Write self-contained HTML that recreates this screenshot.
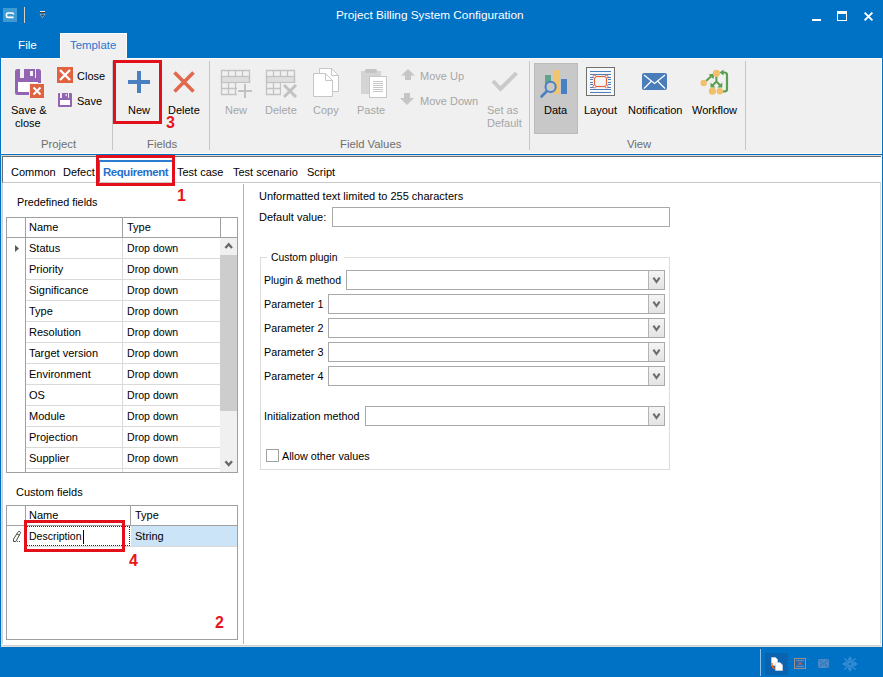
<!DOCTYPE html>
<html><head><meta charset="utf-8"><title>Project Billing System Configuration</title>
<style>
*{margin:0;padding:0;box-sizing:border-box}
html,body{width:883px;height:677px;overflow:hidden}
body{position:relative;background:#0072c6;font-family:"Liberation Sans",sans-serif;font-size:11px;color:#000}
.a{position:absolute}
.t{position:absolute;white-space:nowrap;line-height:13px;font-size:11px}
svg{position:absolute;overflow:visible}
.g{color:#a6a6a6}
.gl{color:#6e6e6e;font-size:11.3px}
.sep{position:absolute;width:1px;background:#c6c6c6;top:61px;height:89px}
.red{position:absolute;border:3px solid #e3101c}
.ann{position:absolute;color:#e8141e;font-weight:bold;font-size:16px;line-height:16px}
.row{position:absolute;height:1px;background:#dadada}
.cb{position:absolute;height:20px;border:1px solid #a9a9a9;background:#fff}
.cb i{position:absolute;right:0;top:0;width:16px;height:18px;border-left:1px solid #b4b4b4;background:linear-gradient(#f4f4f4,#e4e4e4)}
</style></head><body>

<!-- ===== Title bar ===== -->
<div class="a" style="left:3px;top:8px;width:14px;height:14px;background:#3d9ad3"></div>
<svg style="left:3px;top:8px" width="14" height="14"><path d="M10.6 6.6 Q10.6 5 9 5 H5 Q3.4 5 3.4 7.2 Q3.4 9.4 5 9.4 H10.6" fill="none" stroke="#fff" stroke-width="1.6"/></svg>
<div class="a" style="left:24px;top:7px;width:1px;height:16px;background:#d9cfc0"></div>
<svg style="left:40px;top:11px" width="6" height="8"><rect x="0" y="0" width="5" height="1" fill="#e8eef4"/><rect x="0" y="1" width="5" height="1" fill="#3a3a3a"/><path d="M0 3.2 H5 L2.5 6.6 Z" fill="#3a3a3a" stroke="#f0f0f0" stroke-width="0.5"/></svg>
<div class="t" style="left:336px;top:8px;font-size:11.8px;line-height:14px;color:#fff">Project Billing System Configuration</div>
<div class="a" style="left:812px;top:19px;width:9px;height:2px;background:#fff"></div>
<div class="a" style="left:837px;top:11px;width:10px;height:10px;border:1px solid #fff;border-top-width:3px"></div>
<svg style="left:864px;top:12px" width="9" height="9"><path d="M0.6 0.6 L8.4 8.4 M8.4 0.6 L0.6 8.4" stroke="#fff" stroke-width="1.9"/></svg>

<!-- ===== Ribbon tabs ===== -->
<div class="t" style="left:18px;top:38px;color:#fff;font-size:11.7px">File</div>
<div class="a" style="left:60px;top:33px;width:67px;height:26px;background:#f0f0f0;border-top:1px solid #fdfbf8;border-left:1px solid #fdfbf8;border-right:1px solid #fdfbf8"></div>
<div class="t" style="left:70px;top:39px;color:#1f76cf;font-size:11.4px">Template</div>

<!-- ===== Ribbon body ===== -->
<div class="a" style="left:1px;top:58px;width:881px;height:96px;background:#f0f0f0;border:1px solid #fdfbf8;border-bottom-color:#fcf8f2"></div>
<div class="a" style="left:61px;top:58px;width:65px;height:1px;background:#f0f0f0"></div>

<!-- Project group -->
<svg style="left:15px;top:69px" width="30" height="30">
 <rect x="0" y="0" width="26" height="26" rx="2.5" fill="#9363b4"/>
 <rect x="5" y="0" width="4" height="9" fill="#f0f0f0"/>
 <rect x="20" y="0" width="1" height="9" fill="#f0f0f0"/>
 <rect x="15" y="2" width="3" height="5" fill="#f4f0f8"/>
 <rect x="3" y="13" width="20" height="10" fill="#fff"/>
 <rect x="14" y="14" width="16" height="16" fill="#f0f0f0"/>
 <rect x="15" y="15" width="14" height="14" fill="#e0623f"/>
 <path d="M18.5 18.5 L25.5 25.5 M25.5 18.5 L18.5 25.5" stroke="#fff" stroke-width="2"/>
</svg>
<div class="t" style="left:11px;top:104px">Save &amp;</div>
<div class="t" style="left:15px;top:117px">close</div>
<svg style="left:57px;top:67px" width="16" height="16"><rect width="16" height="16" fill="#e0623f"/><path d="M3 3 L13 13 M13 3 L3 13" stroke="#fff" stroke-width="2.4"/></svg>
<div class="t" style="left:77px;top:70px">Close</div>
<svg style="left:58px;top:93px" width="14" height="14">
 <rect width="14" height="14" rx="1" fill="#9363b4"/>
 <rect x="2" y="0" width="2" height="5" fill="#f0f0f0"/>
 <rect x="10" y="0" width="1" height="5" fill="#f0f0f0"/>
 <rect x="7.6" y="1" width="1.2" height="2.2" fill="#eee"/>
 <rect x="2" y="7" width="10" height="5" fill="#fff"/>
</svg>
<div class="t" style="left:77px;top:95px">Save</div>
<div class="t gl" style="left:41px;top:138px">Project</div>
<div class="sep" style="left:112px"></div>

<!-- Fields group -->
<svg style="left:128px;top:71px" width="22" height="22"><path d="M11 0 V22 M0 11 H22" stroke="#4a7fc0" stroke-width="4"/></svg>
<div class="t" style="left:128px;top:104px">New</div>
<svg style="left:173px;top:71px" width="22" height="22"><path d="M1.5 1.5 L20.5 20.5 M20.5 1.5 L1.5 20.5" stroke="#e0694d" stroke-width="3.6"/></svg>
<div class="t" style="left:168px;top:104px">Delete</div>
<div class="t gl" style="left:147px;top:138px">Fields</div>
<div class="sep" style="left:209px"></div>

<!-- Field values group -->
<svg style="left:221px;top:70px" width="32" height="28">
 <g stroke="#c2c2c2" stroke-width="1.3" fill="none">
 <rect x="0.5" y="6.5" width="28" height="6" fill="#dedede"/>
 <path d="M0.5 0.5 H28.5 V24.5 H0.5 Z M0.5 18.5 H28.5 M7.5 0.5 V6.5 M14.5 0.5 V6.5 M21.5 0.5 V6.5 M7.5 12.5 V24.5 M14.5 12.5 V24.5 M21.5 12.5 V24.5"/>
 </g>
 <rect x="16" y="13" width="16" height="15" fill="#f0f0f0"/>
 <path d="M24 14 V28 M17 21 H31" stroke="#c2c2c2" stroke-width="2"/>
</svg>
<div class="t g" style="left:225px;top:104px">New</div>
<svg style="left:266px;top:70px" width="32" height="28">
 <g stroke="#c2c2c2" stroke-width="1.3" fill="none">
 <rect x="0.5" y="6.5" width="28" height="6" fill="#dedede"/>
 <path d="M0.5 0.5 H28.5 V24.5 H0.5 Z M0.5 18.5 H28.5 M7.5 0.5 V6.5 M14.5 0.5 V6.5 M21.5 0.5 V6.5 M7.5 12.5 V24.5 M14.5 12.5 V24.5 M21.5 12.5 V24.5"/>
 </g>
 <rect x="15" y="13" width="17" height="15" fill="#f0f0f0"/>
 <path d="M18 15 L30 27 M30 15 L18 27" stroke="#c2c2c2" stroke-width="3"/>
</svg>
<div class="t g" style="left:265px;top:104px">Delete</div>
<svg style="left:313px;top:68px" width="28" height="30">
 <path d="M6.5 0.5 H18.5 L25.5 7.5 V23.5 H6.5 Z" fill="#fff" stroke="#c6c6c6"/>
 <path d="M18.5 0.5 V7.5 H25.5" fill="none" stroke="#c6c6c6"/>
 <path d="M0.5 5.5 H12.5 L19.5 12.5 V28.5 H0.5 Z" fill="#fff" stroke="#c6c6c6"/>
 <path d="M12.5 5.5 V12.5 H19.5" fill="none" stroke="#c6c6c6"/>
</svg>
<div class="t g" style="left:313px;top:104px">Copy</div>
<svg style="left:361px;top:68px" width="28" height="31">
 <rect x="0" y="3" width="20" height="23" fill="#d4d4d4"/>
 <rect x="4" y="1" width="12" height="4" rx="1.5" fill="#c4c4c4"/>
 <rect x="8.5" y="8.5" width="17" height="21" fill="#fff" stroke="#c6c6c6"/>
 <path d="M12 13.5 H22 M12 15.5 H22 M12 17.5 H22 M12 19.5 H22 M12 21.5 H22 M12 23.5 H22" stroke="#c6c6c6"/>
</svg>
<div class="t g" style="left:357px;top:104px">Paste</div>
<svg style="left:401px;top:69px" width="15" height="12"><path d="M7 0 L14 6.5 H10 V11 H4 V6.5 H0 Z" fill="#c6c6c6"/></svg>
<div class="t g" style="left:420px;top:70px">Move Up</div>
<svg style="left:400px;top:93px" width="15" height="12"><path d="M4 0 H10 V5 H14 L7 12 L0 5 H4 Z" fill="#c6c6c6"/></svg>
<div class="t g" style="left:420px;top:95px">Move Down</div>
<svg style="left:491px;top:71px" width="28" height="22"><path d="M2 10 L9.5 18 L25.5 2" fill="none" stroke="#cacaca" stroke-width="4"/></svg>
<div class="t g" style="left:487px;top:104px">Set as</div>
<div class="t g" style="left:487px;top:117px">Default</div>
<div class="t gl" style="left:340px;top:138px">Field Values</div>
<div class="sep" style="left:529px"></div>

<!-- View group -->
<div class="a" style="left:534px;top:63px;width:44px;height:71px;background:#c8c8c8;border:1px solid #bababa"></div>
<svg style="left:540px;top:69px" width="30" height="30">
 <rect x="5" y="6" width="6" height="9" fill="#5fa58a"/>
 <rect x="13" y="1" width="6" height="24" fill="#f2c46f"/>
 <rect x="21" y="10" width="6" height="15" fill="#4a7fc0"/>
 <circle cx="10.6" cy="17.9" r="5.1" fill="#c8c8c8" stroke="#4a7fc0" stroke-width="2"/>
 <path d="M6.5 22.5 L1.5 27.5" stroke="#4a7fc0" stroke-width="2.6" stroke-linecap="round"/>
</svg>
<div class="t" style="left:544px;top:104px">Data</div>
<svg style="left:586px;top:67px" width="30" height="30">
 <rect x="0.5" y="0.5" width="28" height="28" fill="#f7f7f7" stroke="#707070"/>
 <path d="M4 4.5 H25 M4 7.5 H25 M4 22.5 H25 M4 25.5 H25 M4 10.5 H7 M4 12.5 H7 M4 15.5 H7 M4 17.5 H7 M4 20.5 H7 M22 10.5 H25 M22 12.5 H25 M22 15.5 H25 M22 17.5 H25 M22 20.5 H25" stroke="#4a7fc0"/>
 <rect x="8.5" y="9.5" width="12" height="10" fill="none" stroke="#e0623f" stroke-width="1.2"/>
 <g fill="#fff" stroke="#e0623f" stroke-width="1"><circle cx="8.5" cy="9.5" r="1.4"/><circle cx="20.5" cy="9.5" r="1.4"/><circle cx="8.5" cy="19.5" r="1.4"/><circle cx="20.5" cy="19.5" r="1.4"/></g>
</svg>
<div class="t" style="left:584px;top:104px">Layout</div>
<svg style="left:642px;top:73px" width="26" height="18">
 <rect x="0" y="0" width="25" height="17" rx="2" fill="#4a7ebb"/>
 <path d="M2 2 L12.5 10.5 L23 2 M2 15.5 L9 8.5 M23 15.5 L16 8.5" fill="none" stroke="#fff" stroke-width="1.2"/>
</svg>
<div class="t" style="left:628px;top:104px">Notification</div>
<svg style="left:700px;top:69px" width="30" height="27">
 <path d="M21 3.5 H24.5 Q27 3.5 27 6 V20 Q27 22.5 24.5 22.5 H22" fill="none" stroke="#5a9e4f" stroke-width="2.2"/>
 <path d="M19.5 3.5 L23.5 0.5 V6.5 Z" fill="#5a9e4f"/>
 <path d="M6 12 L11.5 7" stroke="#5a9e4f" stroke-width="2"/>
 <path d="M14.5 4.5 L8.5 5.5 L13.5 10 Z" fill="#5a9e4f"/>
 <path d="M16.4 7 V13.5 M16.4 12.5 L12.5 16.5 M16.4 12.5 L20.3 16.5" fill="none" stroke="#5a9e4f" stroke-width="2"/>
 <path d="M10.5 13.5 V18.5 H15.5 Z M22.3 13.5 V18.5 H17.3 Z" fill="#5a9e4f"/>
 <g fill="#f1c06c"><circle cx="16.4" cy="4.3" r="3.6"/><circle cx="3.7" cy="14" r="3.2"/><circle cx="12.4" cy="22.2" r="3.6"/><circle cx="19.8" cy="22.2" r="3.2"/></g>
</svg>
<div class="t" style="left:692px;top:104px">Workflow</div>
<div class="t gl" style="left:627px;top:138px">View</div>
<div class="sep" style="left:745px"></div>

<!-- ===== Content ===== -->
<div class="a" style="left:1px;top:155px;width:881px;height:492px;background:#fff;border-left:1px solid #e1dbd5;border-top:1px solid #e1dbd5;border-bottom:1px solid #e3ded9"></div>
<div class="a" style="left:2px;top:645px;width:879px;height:1px;background:#d0d0d0"></div>
<!-- tab strip -->
<div class="a" style="left:2px;top:156px;width:879px;height:27px;background:#fff;border-top:1px solid #6d6d6d;border-left:1px solid #6d6d6d;border-bottom:1px solid #c8c8c8"></div>
<div class="a" style="left:2px;top:183px;width:1px;height:461px;background:#d0d0d0"></div>
<div class="a" style="left:880px;top:183px;width:1px;height:461px;background:#d8d8d8"></div>
<div class="t" style="left:11px;top:166px">Common</div>
<div class="t" style="left:63px;top:166px">Defect</div>
<div class="a" style="left:99px;top:160px;width:73px;height:2px;background:#2b7bd0"></div>
<div class="a" style="left:99px;top:160px;width:1px;height:22px;background:#2b7bd0"></div>
<div class="t" style="left:103px;top:165.5px;font-weight:bold;color:#1f6fcc;font-size:11.4px;letter-spacing:-0.4px">Requirement</div>
<div class="t" style="left:177px;top:166px">Test case</div>
<div class="t" style="left:233px;top:166px">Test scenario</div>
<div class="t" style="left:307px;top:166px">Script</div>

<div class="a" style="left:243px;top:184px;width:1px;height:460px;background:#b4b4b4"></div>

<!-- predefined grid -->
<div class="t" style="left:17px;top:196px;font-size:10.8px">Predefined fields</div>
<div class="a" style="left:6px;top:217px;width:232px;height:256px;border:1px solid #a0a0a0;background:#fff"></div>
<div class="a" style="left:7px;top:237px;width:214px;height:1px;background:#a0a0a0"></div>
<div class="a" style="left:25px;top:218px;width:1px;height:254px;background:#a0a0a0"></div>
<div class="a" style="left:122px;top:218px;width:1px;height:19px;background:#a0a0a0"></div>
<div class="a" style="left:220px;top:218px;width:1px;height:19px;background:#a0a0a0"></div>
<div class="a" style="left:122px;top:238px;width:1px;height:234px;background:#dadada"></div>
<div class="a" style="left:7px;top:237px;width:230px;height:1px;background:#a0a0a0"></div>
<div class="row" style="left:26px;top:258px;width:195px"></div>
<div class="row" style="left:26px;top:279px;width:195px"></div>
<div class="row" style="left:26px;top:300px;width:195px"></div>
<div class="row" style="left:26px;top:321px;width:195px"></div>
<div class="row" style="left:26px;top:342px;width:195px"></div>
<div class="row" style="left:26px;top:363px;width:195px"></div>
<div class="row" style="left:26px;top:384px;width:195px"></div>
<div class="row" style="left:26px;top:405px;width:195px"></div>
<div class="row" style="left:26px;top:426px;width:195px"></div>
<div class="row" style="left:26px;top:447px;width:195px"></div>
<div class="row" style="left:26px;top:468px;width:195px"></div>
<!-- scrollbar -->
<div class="a" style="left:220px;top:238px;width:17px;height:234px;background:#f0f0f0"></div>
<div class="a" style="left:220px;top:255px;width:17px;height:156px;background:#cdcdcd"></div>
<svg style="left:224px;top:242px" width="10" height="8"><path d="M1.4 6 L4.7 2.2 L8 6" fill="none" stroke="#686868" stroke-width="2.3"/></svg>
<svg style="left:224px;top:460px" width="10" height="8"><path d="M1.4 1.2 L4.7 5 L8 1.2" fill="none" stroke="#686868" stroke-width="2.3"/></svg>
<svg style="left:15px;top:245px" width="5" height="8"><path d="M0 0 L4 3.5 L0 7 Z" fill="#5a5a5a"/></svg>
<div class="t" style="left:29px;top:221px">Name</div>
<div class="t" style="left:127px;top:221px">Type</div>
<div class="t" style="left:29px;top:242px">Status</div><div class="t" style="left:127px;top:242px;font-size:10.6px">Drop down</div>
<div class="t" style="left:29px;top:263px">Priority</div><div class="t" style="left:127px;top:263px;font-size:10.6px">Drop down</div>
<div class="t" style="left:29px;top:284px">Significance</div><div class="t" style="left:127px;top:284px;font-size:10.6px">Drop down</div>
<div class="t" style="left:29px;top:305px">Type</div><div class="t" style="left:127px;top:305px;font-size:10.6px">Drop down</div>
<div class="t" style="left:29px;top:326px">Resolution</div><div class="t" style="left:127px;top:326px;font-size:10.6px">Drop down</div>
<div class="t" style="left:29px;top:347px">Target version</div><div class="t" style="left:127px;top:347px;font-size:10.6px">Drop down</div>
<div class="t" style="left:29px;top:368px">Environment</div><div class="t" style="left:127px;top:368px;font-size:10.6px">Drop down</div>
<div class="t" style="left:29px;top:389px">OS</div><div class="t" style="left:127px;top:389px;font-size:10.6px">Drop down</div>
<div class="t" style="left:29px;top:410px">Module</div><div class="t" style="left:127px;top:410px;font-size:10.6px">Drop down</div>
<div class="t" style="left:29px;top:431px">Projection</div><div class="t" style="left:127px;top:431px;font-size:10.6px">Drop down</div>
<div class="t" style="left:29px;top:452px">Supplier</div><div class="t" style="left:127px;top:452px;font-size:10.6px">Drop down</div>

<!-- custom grid -->
<div class="t" style="left:16px;top:486px">Custom fields</div>
<div class="a" style="left:6px;top:505px;width:232px;height:135px;border:1px solid #a0a0a0;background:#fff"></div>
<div class="a" style="left:7px;top:525px;width:230px;height:1px;background:#a0a0a0"></div>
<div class="a" style="left:25px;top:506px;width:1px;height:40px;background:#a0a0a0"></div>
<div class="a" style="left:130px;top:506px;width:1px;height:19px;background:#a0a0a0"></div>
<div class="a" style="left:131px;top:526px;width:106px;height:20px;background:#cce4f7"></div>
<div class="a" style="left:26px;top:546px;width:211px;height:1px;background:#dadada"></div>
<div class="a" style="left:27px;top:526px;width:103px;height:20px;border:1px dotted #303030;border-left:none"></div>
<svg style="left:12px;top:530px" width="10" height="13"><path d="M1.5 11.5 V9.2 L5.8 2.3 Q6.8 0.9 7.9 1.6 Q8.9 2.4 8.1 3.7 L3.8 11.5 Z M4.9 3.9 L7.3 5.3" fill="none" stroke="#4a4a4a" stroke-width="1"/><rect x="5" y="11" width="1" height="1" fill="#4a4a4a"/><rect x="7" y="11" width="1" height="1" fill="#4a4a4a"/></svg>
<div class="t" style="left:29px;top:509px">Name</div>
<div class="t" style="left:135px;top:509px">Type</div>
<div class="t" style="left:29px;top:530px;font-size:10.5px">Description</div>
<div class="a" style="left:83px;top:530px;width:1px;height:14px;background:#000"></div>
<div class="t" style="left:135px;top:530px">String</div>

<!-- right panel -->
<div class="t" style="left:259px;top:190px">Unformatted text limited to 255 characters</div>
<div class="t" style="left:259px;top:211px">Default value:</div>
<div class="a" style="left:332px;top:207px;width:338px;height:20px;border:1px solid #a9a9a9;background:#fff"></div>

<div class="a" style="left:260px;top:257px;width:410px;height:213px;border:1px solid #dcdcdc"></div>
<div class="a" style="left:267px;top:252px;width:77px;height:12px;background:#fff"></div>
<div class="t" style="left:271px;top:251px;font-size:10.4px">Custom plugin</div>

<div class="t" style="left:264px;top:274px;font-size:10.5px">Plugin &amp; method</div>
<div class="cb" style="left:346px;top:270px;width:319px"><i><svg style="left:3px;top:6px" width="9" height="7"><path d="M1.4 0.6 L4.5 5 L7.6 0.6" fill="none" stroke="#6c6c6c" stroke-width="2.1"/></svg></i></div>
<div class="t" style="left:264px;top:298px;font-size:10.8px">Parameter 1</div>
<div class="cb" style="left:328px;top:294px;width:337px"><i><svg style="left:3px;top:6px" width="9" height="7"><path d="M1.4 0.6 L4.5 5 L7.6 0.6" fill="none" stroke="#6c6c6c" stroke-width="2.1"/></svg></i></div>
<div class="t" style="left:264px;top:322px;font-size:10.8px">Parameter 2</div>
<div class="cb" style="left:328px;top:318px;width:337px"><i><svg style="left:3px;top:6px" width="9" height="7"><path d="M1.4 0.6 L4.5 5 L7.6 0.6" fill="none" stroke="#6c6c6c" stroke-width="2.1"/></svg></i></div>
<div class="t" style="left:264px;top:346px;font-size:10.8px">Parameter 3</div>
<div class="cb" style="left:328px;top:342px;width:337px"><i><svg style="left:3px;top:6px" width="9" height="7"><path d="M1.4 0.6 L4.5 5 L7.6 0.6" fill="none" stroke="#6c6c6c" stroke-width="2.1"/></svg></i></div>
<div class="t" style="left:264px;top:370px;font-size:10.8px">Parameter 4</div>
<div class="cb" style="left:328px;top:366px;width:337px"><i><svg style="left:3px;top:6px" width="9" height="7"><path d="M1.4 0.6 L4.5 5 L7.6 0.6" fill="none" stroke="#6c6c6c" stroke-width="2.1"/></svg></i></div>
<div class="t" style="left:264px;top:410px;font-size:10.8px">Initialization method</div>
<div class="cb" style="left:365px;top:406px;width:300px"><i><svg style="left:3px;top:6px" width="9" height="7"><path d="M1.4 0.6 L4.5 5 L7.6 0.6" fill="none" stroke="#6c6c6c" stroke-width="2.1"/></svg></i></div>
<div class="a" style="left:266px;top:449px;width:13px;height:13px;border:1px solid #a0a0a0;background:#fff"></div>
<div class="t" style="left:282px;top:450px;font-size:10.8px">Allow other values</div>

<!-- ===== annotations ===== -->
<div class="red" style="left:113px;top:60px;width:49px;height:64px"></div>
<div class="ann" style="left:166px;top:115px">3</div>
<div class="red" style="left:96px;top:155px;width:79px;height:31px"></div>
<div class="ann" style="left:177px;top:188px">1</div>
<div class="red" style="left:24px;top:520px;width:101px;height:32px"></div>
<div class="ann" style="left:129px;top:553px">4</div>
<div class="ann" style="left:215px;top:615px">2</div>

<!-- ===== status bar ===== -->
<div class="a" style="left:760px;top:649px;width:1px;height:27px;background:#8fc0e8"></div>
<div class="a" style="left:765px;top:653px;width:23px;height:22px;background:#0a63ae"></div>
<svg style="left:770px;top:657px" width="14" height="14">
 <path d="M1.5 0.5 H5.5 L7.5 2.5 V8.5 H1.5 Z" fill="#fff" stroke="#d8d8d8" stroke-width="0.6"/>
 <path d="M5.5 5.5 H10 L12.5 8 V13.5 H5.5 Z" fill="#fff" stroke="#d8d8d8" stroke-width="0.6"/>
 <path d="M2 6 Q1.5 10.5 5 11.5" fill="none" stroke="#f26522" stroke-width="1.4"/>
</svg>
<svg style="left:794px;top:658px" width="12" height="11"><rect x="0.5" y="0.5" width="11" height="10" fill="#1a6cb8" stroke="#9a9088"/><path d="M2 2.5 H10 M2 8.5 H10" stroke="#6a9ad0" stroke-width="0.8"/><path d="M4.2 3.8 L7.8 7.2 M7.8 3.8 L4.2 7.2" stroke="#e8603a" stroke-width="1"/></svg>
<svg style="left:818px;top:659px" width="11" height="9"><rect x="0" y="0" width="11" height="9" rx="1" fill="#4a88c8"/><path d="M0.8 0.8 L5.5 5 L10.2 0.8 M0.8 8.4 L4 5 M10.2 8.4 L7 5" fill="none" stroke="#1e6fb8" stroke-width="0.9"/></svg>
<svg style="left:842px;top:656px" width="17" height="16"><g fill="none" stroke="#3a8ed6" stroke-width="1.3"><circle cx="8" cy="8" r="2"/><rect x="5" y="5" width="6" height="6"/><path d="M8 0.5 V3.5 M8 12.5 V15.5 M0.5 8 H3.5 M12.5 8 H15.5 M2.5 2.5 L4.5 4.5 M13.5 2.5 L11.5 4.5 M2.5 13.5 L4.5 11.5 M13.5 13.5 L11.5 11.5"/></g><path d="M3 6 V10 M13 6 V10 M6 3 H10 M6 13 H10" stroke="#3a8ed6" stroke-width="1.5"/></svg>

</body></html>
